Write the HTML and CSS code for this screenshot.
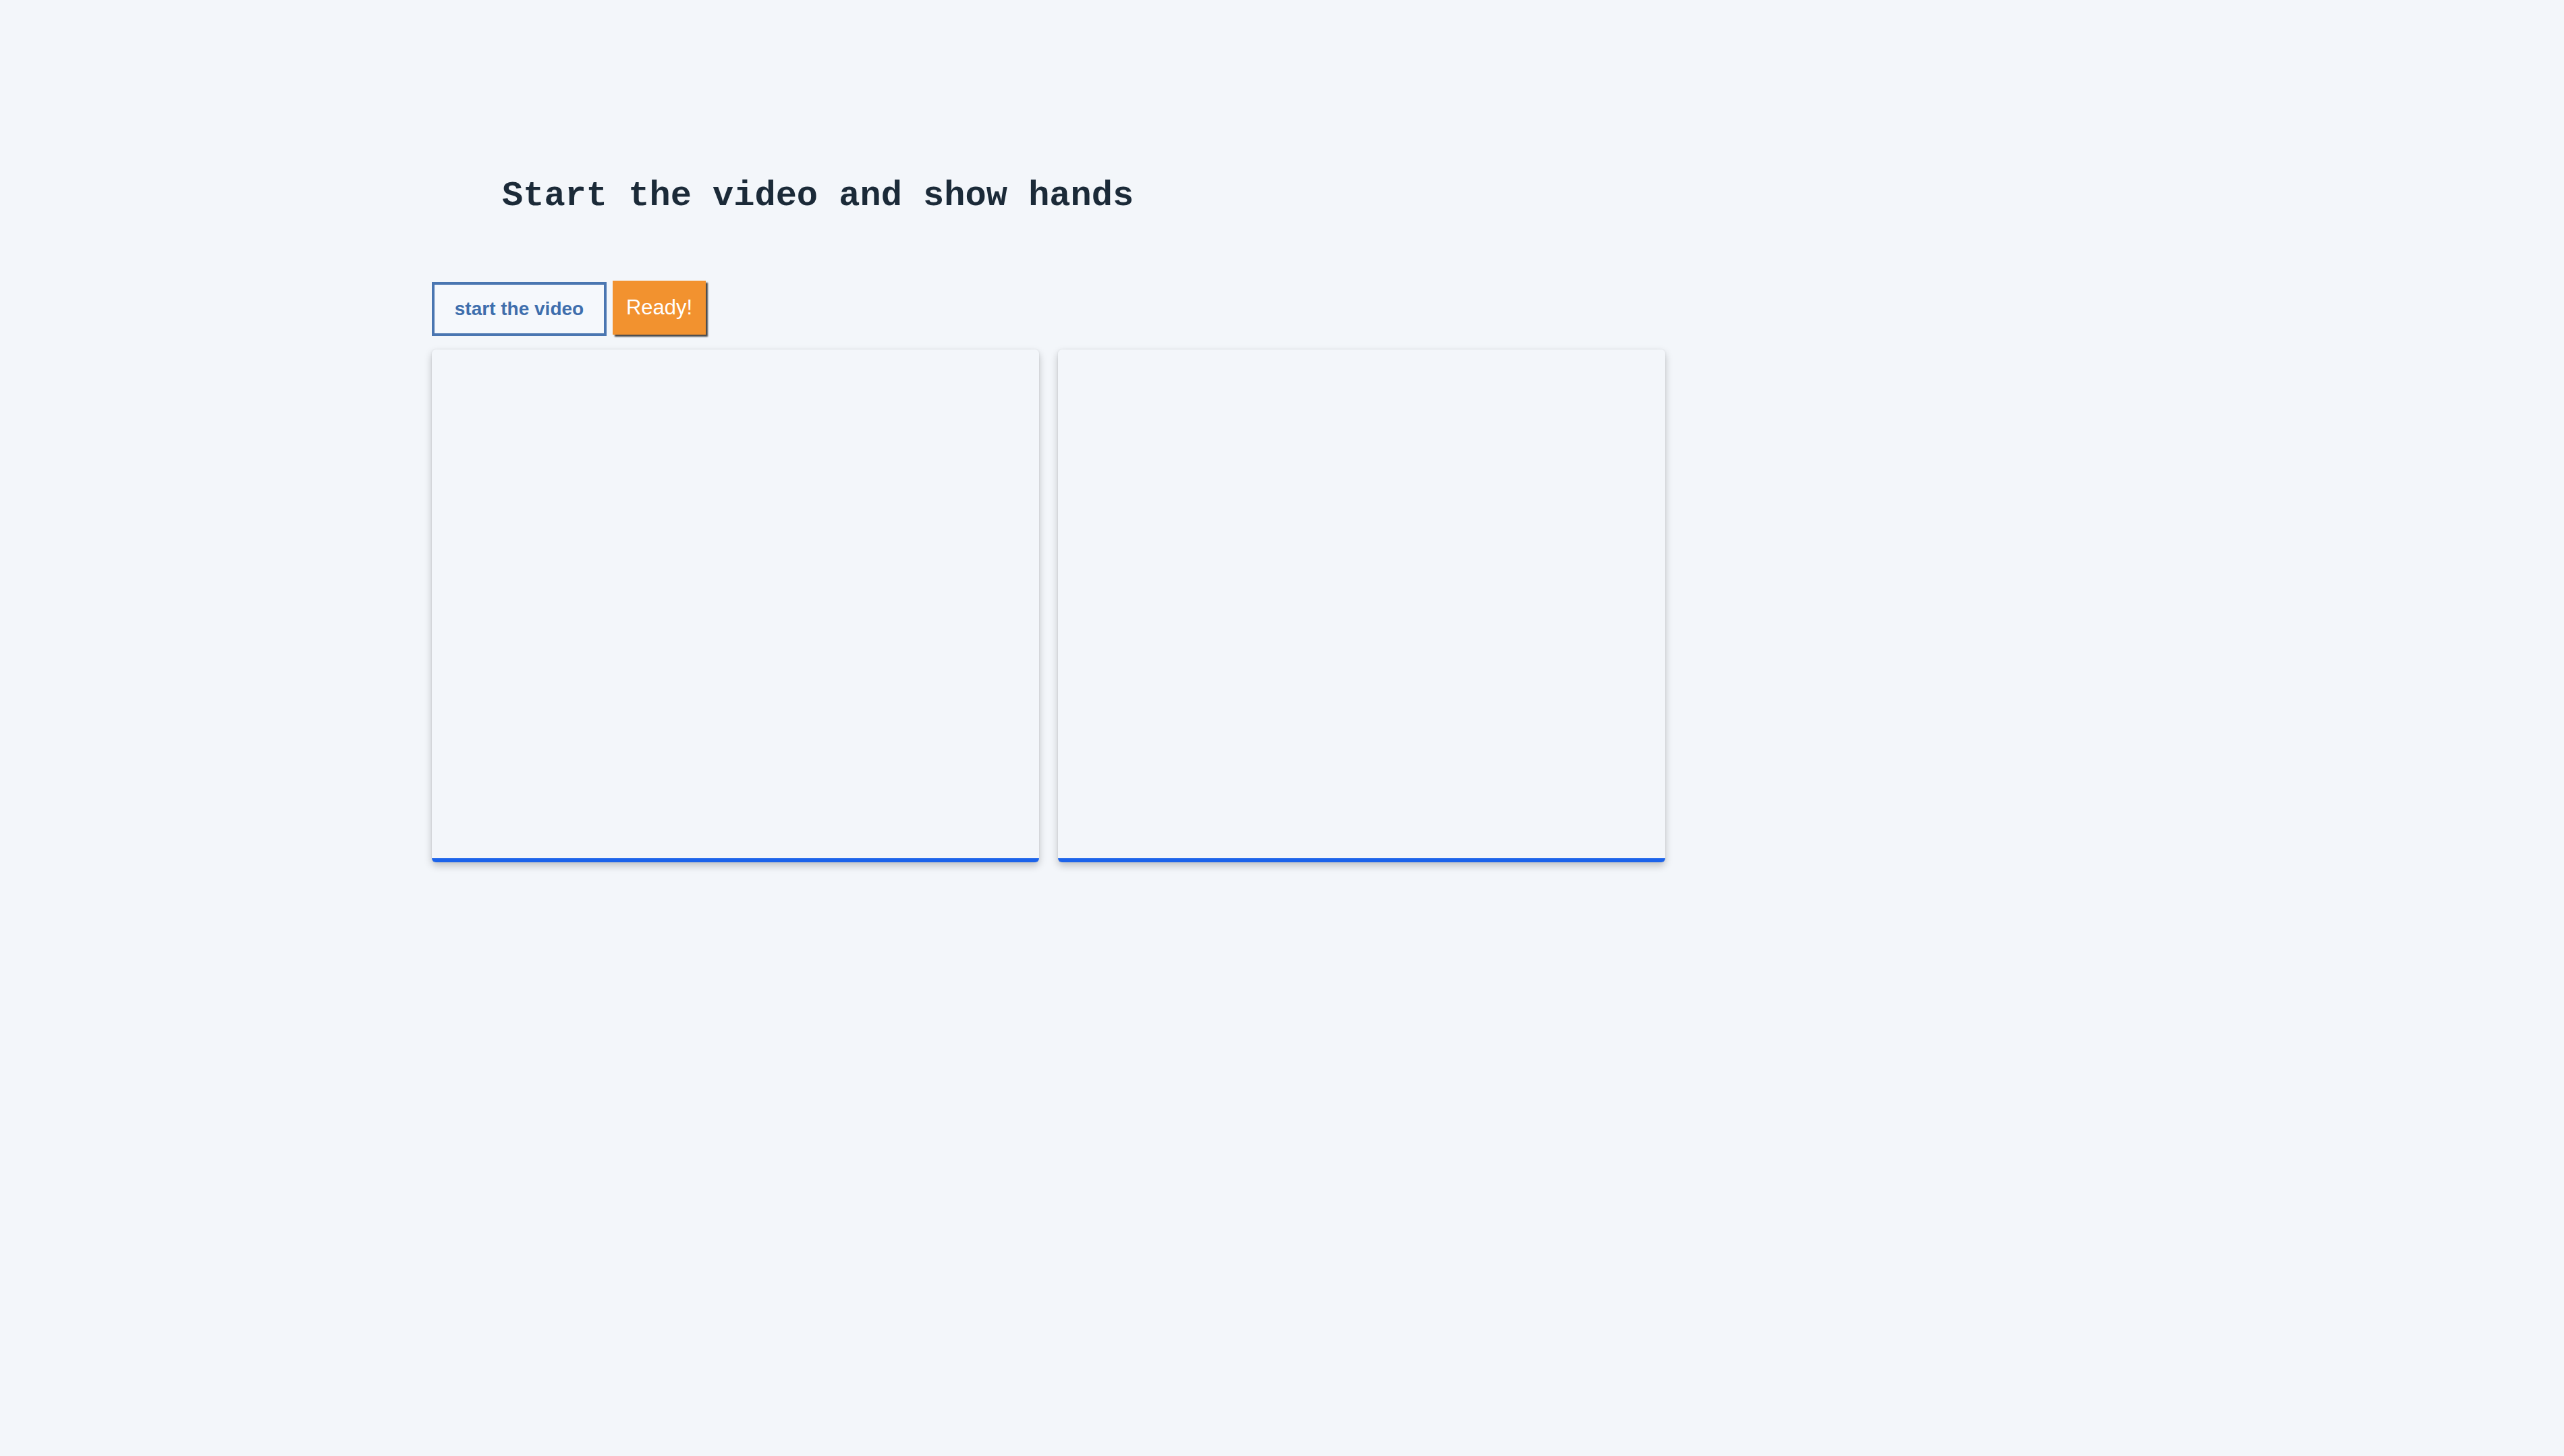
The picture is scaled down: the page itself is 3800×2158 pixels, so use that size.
FILE: index.html
```html
<!DOCTYPE html>
<html lang="en">
<head>
<meta charset="utf-8">
<title>Start the video and show hands</title>
<link rel="stylesheet" href="styles.css">
</head>
<body>
<main class="page">
  <h1 class="title">Start the video and show hands</h1>
  <div class="controls">
    <button class="btn btn-start">start the video</button>
    <button class="btn btn-ready">Ready!</button>
  </div>
  <div class="panels">
    <div class="panel"></div>
    <div class="panel"></div>
  </div>
</main>
</body>
</html>
```
FILE: styles.css
```css
html, body {
  margin: 0;
  padding: 0;
  background: #f3f6fa;
  width: 100%;
  height: 100%;
}
.page {
  padding: 261px 0 0 640px;
  font-family: "Liberation Sans", Arial, sans-serif;
}
.title {
  margin: 0 0 0 104px;
  font-family: "Liberation Mono", "Courier New", monospace;
  font-weight: 700;
  font-size: 52px;
  line-height: 59px;
  color: #1b2a38;
}
.controls {
  display: flex;
  align-items: flex-start;
  gap: 9px;
  margin-top: 96px;
}
.btn {
  box-sizing: border-box;
  height: 80px;
  margin: 0;
  cursor: pointer;
  font-family: "Liberation Sans", Arial, sans-serif;
}
.btn-start {
  width: 259px;
  margin-top: 2px;
  border: 4px solid #4a76b1;
  background: #f5f8fc;
  color: #3e6ead;
  font-weight: 700;
  font-size: 28px;
  padding: 0;
}
.btn-ready {
  width: 138px;
  border: none;
  background: #f2922f;
  color: #ffffff;
  font-size: 31px;
  padding: 0;
  box-shadow: 3px 3px 2px rgba(40, 40, 40, 0.85);
}
.panels {
  display: flex;
  gap: 28px;
  margin-top: 20px;
}
.panel {
  box-sizing: border-box;
  width: 900px;
  height: 760px;
  background: #f3f6fa;
  border-radius: 6px;
  border-bottom: 6px solid #1c63ea;
  box-shadow: 0 5px 12px rgba(0, 0, 0, 0.22), 0 0 3px rgba(0, 0, 0, 0.08);
}
```
